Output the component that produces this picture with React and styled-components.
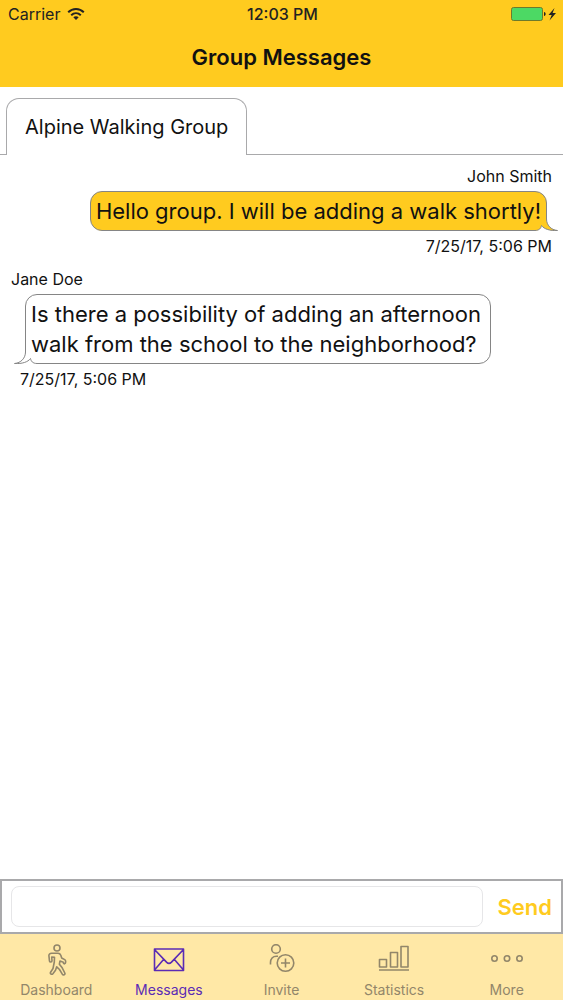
import React, { Component } from 'react';
import styled, { createGlobalStyle } from 'styled-components';

const GlobalStyle = createGlobalStyle`
	:root {
		--yellow: #ffcb1f;
		--pale: #ffe8a6;
		--line: #a9a9ab;
		--outline: #858585;
		--muted: #92866a;
		--purple: #5b2bb5;
	}
	* {
		box-sizing: border-box;
	}
	body {
		margin: 0;
		background: #fff;
		color: #111;
		font-family: Inter, 'Liberation Sans', sans-serif;
	}
	button, input {
		font-family: inherit;
	}
`;

const messages = [
	{ id: 1, mine: true, author: 'John Smith', text: 'Hello group. I will be adding a walk shortly!', time: '7/25/17, 5:06 PM' },
	{ id: 2, mine: false, author: 'Jane Doe', text: 'Is there a possibility of adding an afternoon walk from the school to the neighborhood?', time: '7/25/17, 5:06 PM' },
];

const WalkIcon = () => (
	<Icon viewBox="0 0 32 32">
		<circle cx="17" cy="4" r="3" />
		<path d="M11.500 9.300h6.500c1.500 0 2.300.8 2.800 2l.9 2.700 3 1.600c1.400.8 1.300 3.800-.2 4.200-.9.200-1.100-.6-1.200-1.600l-3.300-1.200-.6 3.200 2.800 3.600 2.600 5.200c.7 1.700-1.500 2.700-2.500 1.200l-2.800-4.700-2.800-2.700-1.200 3.400-2.600 3.500c-1.100 1.200-3.200.1-2.300-1.500l2.400-3.700 1.300-6.500.2-4.600-2.800-.4.300 3.800c0 1.500-2.200 1.700-2.500.3l-.6-5.400c-.1-1.400.9-2.400 2.600-2.400z" />
	</Icon>
);

const MailIcon = () => (
	<Icon viewBox="0 0 32 32">
		<path d="M1.500 5h29v21.500h-29zM1.500 5.500l12 12.600c1.500 1.500 3.500 1.500 5 0l12-12.600M1.500 26l9.500-11M30.500 26l-9.500-11" />
	</Icon>
);

const InviteIcon = () => (
	<Icon viewBox="0 0 32 32">
		<circle cx="11" cy="5" r="4.300" />
		<path d="M5.500 20.500v-2c0-3.800 2.200-6.200 6-6.200h1.500" />
		<circle cx="20.500" cy="19" r="8.300" />
		<path d="M20.500 14.500v9M16 19h9" />
	</Icon>
);

const StatsIcon = () => (
	<Icon viewBox="0 0 32 32">
		<path d="M1.500 15.500h7v7.500h-7zM12.500 8.500h7v14.500h-7zM23 2.500h7v20.500h-7zM1 26h30" />
	</Icon>
);

const MoreIcon = () => (
	<Icon viewBox="0 0 32 32">
		<circle cx="3.500" cy="14.500" r="2.700" />
		<circle cx="16" cy="14.500" r="2.700" />
		<circle cx="28.500" cy="14.500" r="2.700" />
	</Icon>
);

const pages = [
	{ name: 'Dashboard', icon: WalkIcon },
	{ name: 'Messages', icon: MailIcon },
	{ name: 'Invite', icon: InviteIcon },
	{ name: 'Statistics', icon: StatsIcon },
	{ name: 'More', icon: MoreIcon },
];

const StatusBar = () => (
	<Status>
		<Carrier>
			Carrier
			<svg width="18" height="14" viewBox="0 0 18 14" fill="none" stroke="#222" strokeWidth="2">
				<path d="M1.200 5.200c4.400-4.300 11.200-4.300 15.600 0M4.200 8.200c2.800-2.600 6.800-2.600 9.600 0" />
				<path d="M6.300 10.300c1.600-1.500 3.800-1.500 5.400 0L9 13z" fill="#222" stroke="none" />
			</svg>
		</Carrier>
		<Clock>12:03 PM</Clock>
		<Battery>
			<svg width="46" height="16" viewBox="0 0 46 16">
				<rect x="0.500" y="1.500" width="31" height="13" rx="2" fill="#4cd964" stroke="#6d7a2c" />
				<path d="M33 6c2.200.4 2.200 3.600 0 4z" fill="#222" />
				<path d="M43.500 2l-6 7h3.200L38.500 14.500l6.500-7.500h-3.400z" fill="#222" />
			</svg>
		</Battery>
	</Status>
);

class Message extends Component {

	render(){
		const { mine, author, text, time } = this.props;

		return (
			<Row $mine={mine}>
				<Author>{author}</Author>
				<Bubble $mine={mine}>
					{text}
					<Tail $mine={mine} viewBox="0 0 24 16">
						<path d="M0 0h13v16h-13z" fill="#fff" />
						<path
							d="M0 0H12.500V4C12.500 10 17 15 23.500 15.500C16 16 10 14 7.500 10.500C7 13 5.500 15.500 1 15.500H0z"
							fill={mine ? '#ffcb1f' : '#fff'}
						/>
						<path
							d="M12.500 0V4C12.500 10 17 15 23.500 15.500C16 16 10 14 7.500 10.500C7 13 5.500 15.500 1 15.500H0"
							fill="none"
							stroke="#858585"
						/>
					</Tail>
				</Bubble>
				<Time $mine={mine}>{time}</Time>
			</Row>
		);
	}
}

class App extends Component {

	state = { draft: '' }

	onChange = (e) => {
		this.setState({ draft: e.target.value });
	}

	onSubmit = (e) => {
		e.preventDefault();
		this.setState({ draft: '' });
	}

	render(){
		return (
			<Screen>
				<GlobalStyle />
				<Header>
					<StatusBar />
					<Title>Group Messages</Title>
				</Header>
				<Groups role='tablist'>
					<GroupTab type='button' role='tab' aria-selected='true'>Alpine Walking Group</GroupTab>
				</Groups>
				<Thread>
					{messages.map(m => <Message key={m.id} {...m} />)}
				</Thread>
				<Composer onSubmit={this.onSubmit}>
					<Draft aria-label='Message' value={this.state.draft} onChange={this.onChange} />
					<Send type='submit'>Send</Send>
				</Composer>
				<TabBar>
					{pages.map(({ name, icon: PageIcon }) => (
						<TabLink key={name} href={'#' + name.toLowerCase()} $active={name === 'Messages'}>
							<PageIcon />
							{name}
						</TabLink>
					))}
				</TabBar>
			</Screen>
		);
	}
}

export default App;

const Screen = styled.div`
	display: flex;
	flex-direction: column;
	min-height: 100vh;
`;

const Header = styled.header`
	background-color: var(--yellow);
`;

const Status = styled.div`
	display: grid;
	grid-template-columns: 1fr auto 1fr;
	align-items: center;
	height: 28px;
	padding: 0 6px 0 8px;
	font-size: 16px;
	color: #222;
`;

const Carrier = styled.div`
	display: flex;
	align-items: center;
	gap: 7px;
`;

const Clock = styled.div`
	font-weight: 500;
`;

const Battery = styled.div`
	display: flex;
	justify-content: flex-end;
`;

const Title = styled.h1`
	margin: 0;
	padding-bottom: 1px;
	font-size: 22px;
	font-weight: 600;
	line-height: 58px;
	text-align: center;
`;

const Groups = styled.div`
	display: flex;
	padding-top: 11px;
	&::before {
		content: '';
		width: 6px;
		border-bottom: 1px solid var(--line);
	}
	&::after {
		content: '';
		flex: 1;
		border-bottom: 1px solid var(--line);
	}
`;

const GroupTab = styled.button`
	height: 57px;
	padding: 0 18px;
	border: 1px solid var(--line);
	border-bottom: none;
	border-radius: 13px 13px 0 0;
	background: none;
	color: #111;
	font-size: 20px;
`;

const Thread = styled.ul`
	flex: 1;
	margin: 0;
	padding: 10px 11px;
	list-style: none;
`;

const Row = styled.li`
	display: flex;
	flex-direction: column;
	align-items: ${props => props.$mine ? 'flex-end' : 'flex-start'};
	margin-bottom: 10px;
`;

const Author = styled.div`
	margin-bottom: 3px;
	font-size: 16px;
	line-height: 23px;
`;

/* isolated so that the tail can sit behind the text but over the border */
const Bubble = styled.div`
	position: relative;
	isolation: isolate;
	max-width: 466px;
	margin: ${props => props.$mine ? '0 5px 0 0' : '0 0 0 14px'};
	padding: 4px 5px;
	border: 1px solid var(--outline);
	border-radius: 12px;
	background-color: ${props => props.$mine ? 'var(--yellow)' : '#fff'};
	font-size: 22px;
	line-height: 30px;
`;

const Tail = styled.svg`
	position: absolute;
	z-index: -1;
	bottom: -1px;
	width: 24px;
	height: 16px;
	${props => props.$mine ? 'right: -12px;' : 'left: -12px; transform: scaleX(-1);'}
`;

const Time = styled.div`
	margin: ${props => props.$mine ? '3px 0 0' : '3px 0 0 9px'};
	font-size: 16px;
	line-height: 24px;
`;

const Composer = styled.form`
	display: flex;
	align-items: center;
	padding: 5px 9px;
	border: 2px solid var(--line);
`;

const Draft = styled.input`
	flex: 1;
	min-width: 0;
	height: 41px;
	padding: 0 10px;
	border: 1px solid #e6e6e8;
	border-radius: 8px;
	font-size: 20px;
`;

const Send = styled.button`
	margin-left: 14px;
	padding: 0;
	border: none;
	background: none;
	color: var(--yellow);
	font-size: 22px;
	font-weight: 600;
`;

const TabBar = styled.nav`
	display: flex;
	height: 66px;
	background-color: var(--pale);
`;

const TabLink = styled.a`
	display: flex;
	flex: 1;
	flex-direction: column;
	align-items: center;
	gap: 6px;
	padding-top: 10px;
	color: ${props => props.$active ? 'var(--purple)' : 'var(--muted)'};
	font-size: 14px;
	line-height: 16px;
	text-decoration: none;
`;

const Icon = styled.svg`
	width: 32px;
	height: 32px;
	fill: none;
	stroke: currentColor;
	stroke-width: 1.6;
	stroke-linejoin: round;
`;
